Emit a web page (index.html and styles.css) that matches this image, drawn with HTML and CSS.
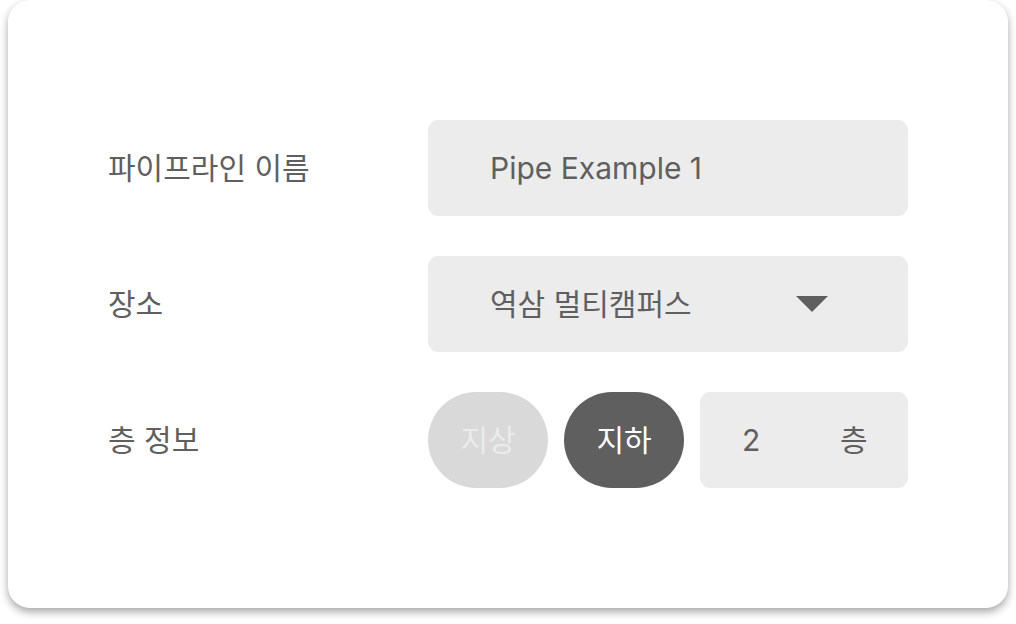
FILE: index.html
```html
<!DOCTYPE html>
<html lang="ko">
<head>
<meta charset="utf-8">
<link rel="stylesheet" href="styles.css">
</head>
<body>
<div class="card">
  <div class="row">
    <div class="label">파이프라인 이름</div>
    <div class="field"><span class="value">Pipe Example 1</span></div>
  </div>
  <div class="row">
    <div class="label">장소</div>
    <div class="field select">
      <span class="value">역삼 멀티캠퍼스</span>
      <svg class="caret" width="32" height="16" viewBox="0 0 32 16"><path d="M0 0H32L16 16Z" fill="#5f5f5f"/></svg>
    </div>
  </div>
  <div class="row">
    <div class="label">층 정보</div>
    <div class="floor">
      <div class="pill off">지상</div>
      <div class="pill on">지하</div>
      <div class="level"><span class="num">2</span><span class="unit">층</span></div>
    </div>
  </div>
</div>
</body>
</html>
```
FILE: styles.css
```css
html, body {
  margin: 0;
  padding: 0;
  background: #ffffff;
}
body {
  padding: 0 8px 16px 8px;
  min-height: 624px;
  box-sizing: border-box;
  font-family: "Inter", "Noto Sans CJK KR", sans-serif;
  color: #5f5f5f;
}
.card {
  width: 1000px;
  height: 608px;
  box-sizing: border-box;
  background: #ffffff;
  border-radius: 22px;
  box-shadow: 0 4px 8px rgba(0, 0, 0, 0.35);
  padding: 120px 100px 0 100px;
  display: flex;
  flex-direction: column;
  gap: 40px;
}
.row {
  display: flex;
  align-items: center;
  height: 96px;
}
.label {
  width: 320px;
  font-size: 30px;
  line-height: 36px;
  color: #5f5f5f;
}
.field {
  width: 480px;
  height: 96px;
  box-sizing: border-box;
  background: #ececec;
  border-radius: 10px;
  padding-left: 62px;
  display: flex;
  align-items: center;
  font-size: 30px;
  line-height: 36px;
}
.select {
  padding-right: 80px;
  justify-content: space-between;
}
.caret {
  display: block;
}
.floor {
  display: flex;
  gap: 16px;
}
.pill {
  width: 120px;
  height: 96px;
  border-radius: 48px;
  display: flex;
  align-items: center;
  justify-content: center;
  font-size: 30px;
  line-height: 36px;
}
.pill.off {
  background: #d9d9d9;
  color: #ebebeb;
}
.pill.on {
  background: #5f5f5f;
  color: #ffffff;
}
.level {
  width: 208px;
  height: 96px;
  box-sizing: border-box;
  background: #ececec;
  border-radius: 10px;
  display: flex;
  align-items: center;
  padding-left: 42px;
  font-size: 30px;
  line-height: 36px;
}
.num {
  width: 98px;
}
```
